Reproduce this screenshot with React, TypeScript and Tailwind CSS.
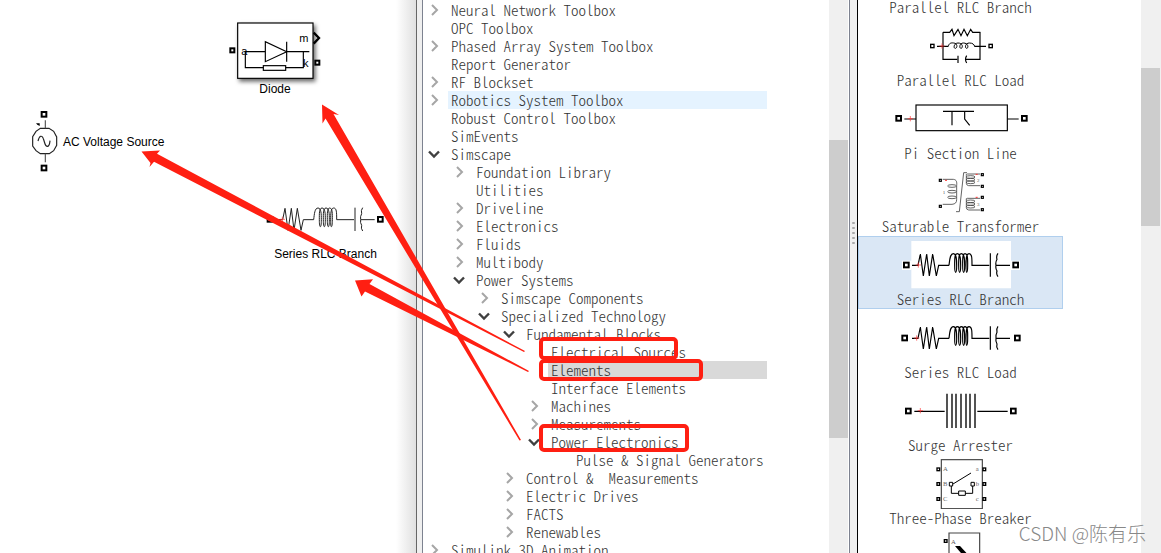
import React, { ReactNode } from 'react';

type NodeState = 'open' | 'closed' | 'leaf';

interface TreeNode {
  label: string;
  level: number;
  state: NodeState;
  highlight?: 'hover' | 'selected';
}

const treeNodes: TreeNode[] = [
  { label: 'Neural Network Toolbox', level: 0, state: 'closed' },
  { label: 'OPC Toolbox', level: 0, state: 'leaf' },
  { label: 'Phased Array System Toolbox', level: 0, state: 'closed' },
  { label: 'Report Generator', level: 0, state: 'leaf' },
  { label: 'RF Blockset', level: 0, state: 'closed' },
  { label: 'Robotics System Toolbox', level: 0, state: 'closed', highlight: 'hover' },
  { label: 'Robust Control Toolbox', level: 0, state: 'leaf' },
  { label: 'SimEvents', level: 0, state: 'leaf' },
  { label: 'Simscape', level: 0, state: 'open' },
  { label: 'Foundation Library', level: 1, state: 'closed' },
  { label: 'Utilities', level: 1, state: 'leaf' },
  { label: 'Driveline', level: 1, state: 'closed' },
  { label: 'Electronics', level: 1, state: 'closed' },
  { label: 'Fluids', level: 1, state: 'closed' },
  { label: 'Multibody', level: 1, state: 'closed' },
  { label: 'Power Systems', level: 1, state: 'open' },
  { label: 'Simscape Components', level: 2, state: 'closed' },
  { label: 'Specialized Technology', level: 2, state: 'open' },
  { label: 'Fundamental Blocks', level: 3, state: 'open' },
  { label: 'Electrical Sources', level: 4, state: 'leaf' },
  { label: 'Elements', level: 4, state: 'leaf', highlight: 'selected' },
  { label: 'Interface Elements', level: 4, state: 'leaf' },
  { label: 'Machines', level: 4, state: 'closed' },
  { label: 'Measurements', level: 4, state: 'closed' },
  { label: 'Power Electronics', level: 4, state: 'open' },
  { label: 'Pulse & Signal Generators', level: 5, state: 'leaf' },
  { label: 'Control &  Measurements', level: 3, state: 'closed' },
  { label: 'Electric Drives', level: 3, state: 'closed' },
  { label: 'FACTS', level: 3, state: 'closed' },
  { label: 'Renewables', level: 3, state: 'closed' },
  { label: 'Simulink 3D Animation', level: 0, state: 'closed' },
];

const indents = ['pl-0', 'pl-[25px]', 'pl-[50px]', 'pl-[75px]', 'pl-[100px]', 'pl-[125px]'];

const highlights = {
  hover: 'bg-[#e5f3ff]',
  selected: 'bg-[#d9d9d9]',
};

function Chevron({ open }: { open: boolean }) {
  return (
    <svg width="12" height="12" viewBox="0 0 12 12" fill="none">
      {open ? (
        <path d="M1 3.5 L6 8.5 L11 3.5" stroke="#404040" strokeWidth="2.4" />
      ) : (
        <path d="M4 1 L9 6 L4 11" stroke="#a6a6a6" strokeWidth="2" />
      )}
    </svg>
  );
}

function TreeRow({ node }: { node: TreeNode }) {
  return (
    <li className={`flex h-[18px] items-center ${indents[node.level]}`}>
      {node.state === 'leaf' ? (
        <span className="w-[25px] shrink-0" />
      ) : (
        <button aria-label={`Toggle ${node.label}`} className="flex h-[18px] w-[25px] shrink-0 items-center pl-[5px]">
          <Chevron open={node.state === 'open'} />
        </button>
      )}
      <span className={`h-[18px] flex-1 whitespace-pre pl-[3px] ${node.highlight ? highlights[node.highlight] : ''}`}>{node.label}</span>
    </li>
  );
}

// Connection port. Symbols are drawn on a grid of 3 units per pixel.
function Port({ x, y, r = 7 }: { x: number; y: number; r?: number }) {
  return <rect x={x - r} y={y - r} width={r * 2} height={r * 2} fill="white" strokeWidth={r > 5 ? 6 : r > 3 ? 4 : 3.5} />;
}

function Plus({ x, y }: { x: number; y: number }) {
  return <path d={`M${x - 8} ${y} h16 M${x} ${y - 8} v16`} stroke="#f33" strokeWidth="2" />;
}

// Resistor, coil and capacitor in a row, starting at 216,316
function SeriesRlc() {
  return (
    <>
      <path d="M216 316 H234 L241 282 L250 348 L260 282 L268 348 L278 282 L289 348 L296 316 H327" />
      <path d="M327 316 C329 300 330 281 340 281 C350 281 350 300 350 316 C350 330 349 337 347 337 C345 337 344 330 344 316 C344 300 343 281 352 281 C362 281 362 300 362 316 C362 330 361 337 359 337 C357 337 356 330 356 316 C356 300 355 281 364 281 C374 281 374 300 374 316 C374 330 373 337 371 337 C369 337 368 330 368 316 C368 300 367 281 375 281 C384 281 383 300 383 316 C383 330 382 337 380 337 C378 337 378 330 378 316 C378 300 378 281 387 281 C396 281 396 294 396 316 H448" />
      <path d="M451 280 V350 M474 280 Q468 288 471 298 Q466 307 468 316 Q466 325 471 333 Q468 342 474 350 M469 316 H510" />
    </>
  );
}

// One secondary winding of the transformer
function Winding({ y }: { y: number }) {
  return (
    <>
      <path d={`M420 ${y} H382 Q377 ${y} 379 ${y + 5} V${y + 28} Q379 ${y + 34} 386 ${y + 35} H420`} />
      <ellipse cx="392" cy={y + 9} rx="13" ry="4" />
      <ellipse cx="392" cy={y + 17} rx="13" ry="4" />
      <ellipse cx="392" cy={y + 25} rx="13" ry="4" />
    </>
  );
}

function LibraryIcon({ top, children }: { top: number; children?: ReactNode }) {
  return (
    <svg width="141" height="53" viewBox={`150 ${top} 423 159`} fill="none" stroke="black" strokeWidth="3.5" className="shrink-0">
      {children}
    </svg>
  );
}

const libraryBlocks = [
  { name: 'Parallel RLC Branch', icon: <LibraryIcon top={0} /> },
  {
    name: 'Parallel RLC Load',
    icon: (
      <LibraryIcon top={54}>
        <path d="M291 139 H325 M403 139 H438 M309 97 V178 H352 M420 97 V178 H378" />
        <path d="M309 97 H329 L336 88 L342 107 L354 88 L363 107 L372 88 L382 107 L392 88 L398 97 H421" />
        <path d="M325 139 C327 129 334 128 341 129 C354 130 352 145 346 145 C339 145 342 129 354 129 C370 129 369 145 363 145 C357 145 358 129 370 129 C386 129 386 145 380 145 C374 145 375 129 388 129 C398 129 402 133 404 139" strokeWidth="3" />
        <path d="M354 167 V189 M380 167 Q373 178 380 189" />
        <Plus x={306} y={138} />
        <Port x={277} y={138} r={5} />
        <Port x={452} y={138} r={5} />
      </LibraryIcon>
    ),
  },
  {
    name: 'Pi Section Line',
    icon: (
      <LibraryIcon top={273}>
        <rect x="228" y="315" width="274" height="77" />
        <path d="M193 357 H228 M502 357 H536 M309 334 H402 M336 334 V376 M374 334 V357 L389 376" />
        <Plus x={211} y={356} />
        <Port x={176} y={355} />
        <Port x={553} y={355} />
      </LibraryIcon>
    ),
  },
  {
    name: 'Saturable Transformer',
    icon: (
      <LibraryIcon top={12}>
        <g stroke="#444" strokeWidth="2.5">
          <path d="M308 58 H340 C350 59 351 66 350 77 V118 C350 128 346 132 336 133 H308" />
          <ellipse cx="336" cy="78" rx="13" ry="4" />
          <ellipse cx="336" cy="95" rx="13" ry="4" />
          <ellipse cx="336" cy="112" rx="13" ry="4" />
          <path d="M381 38 H371 L358 155 H348" />
          <Winding y={42} />
          <Winding y={115} />
        </g>
        <g fill="#555" stroke="none" fontSize="15" fontFamily="Liberation Serif, serif">
          <text x="308" y="101">1</text>
          <text x="411" y="65">2</text>
          <text x="411" y="138">3</text>
        </g>
        <path d="M315 61 h6 M407 43 h6 M407 112 h6" stroke="#f33" strokeWidth="3" />
        <Port x={301} y={61} r={3} />
        <Port x={301} y={139} r={3} />
        <Port x={427} y={44} r={3} />
        <Port x={427} y={79} r={3} />
        <Port x={427} y={112} r={3} />
        <Port x={427} y={149} r={3} />
      </LibraryIcon>
    ),
  },
  {
    name: 'Series RLC Branch',
    selected: true,
    icon: (
      <LibraryIcon top={231}>
        <path d="M214 243 H513 V385 H214 Z M186 302 H214 V330 H186 Z M513 302 H540 V330 H513 Z" fill="white" stroke="none" />
        <SeriesRlc />
        <Plus x={235} y={315} />
        <Port x={199} y={315} />
        <Port x={527} y={315} />
      </LibraryIcon>
    ),
  },
  {
    name: 'Series RLC Load',
    icon: (
      <LibraryIcon top={30}>
        <g transform="translate(0 -201)">
          <SeriesRlc />
        </g>
        <Plus x={230} y={114} />
        <Port x={194} y={114} />
        <Port x={532} y={114} />
      </LibraryIcon>
    ),
  },
  {
    name: 'Surge Arrester',
    icon: (
      <LibraryIcon top={249}>
        <path d="M223 334 H314 M412 334 H503" />
        <path d="M321 281 V384 M336 281 V384 M348 281 V384 M363 281 V384 M378 281 V384 M390 281 V384 M405 281 V384" stroke="#333" strokeWidth="5" />
        <Plus x={241} y={332} />
        <Port x={205} y={333} />
        <Port x={520} y={333} />
      </LibraryIcon>
    ),
  },
  {
    name: 'Three-Phase Breaker',
    icon: (
      <LibraryIcon top={48}>
        <rect x="304" y="59" width="123" height="147" stroke="#444" />
        <path d="M339 132 L393 99 M334 138 V160 H356 M376 160 H398 V138" strokeWidth="3" />
        <path d="M328 127 H338 V138 H328 Z M393 127 H403 V138 H393 Z M356 153 H376 V166 H356 Z" strokeWidth="3" />
        <g fill="#666" stroke="none" fontSize="20" fontFamily="Liberation Serif, serif">
          <text x="309" y="94">A</text>
          <text x="309" y="139">B</text>
          <text x="309" y="183">C</text>
          <text x="407" y="94">a</text>
          <text x="407" y="139">b</text>
          <text x="407" y="183">c</text>
        </g>
        <Port x={295} y={88} r={4} />
        <Port x={295} y={132} r={4} />
        <Port x={295} y={177} r={4} />
        <Port x={433} y={88} r={4} />
        <Port x={433} y={132} r={4} />
        <Port x={433} y={177} r={4} />
      </LibraryIcon>
    ),
  },
  {
    name: '',
    icon: (
      <LibraryIcon top={267}>
        <path d="M327 430 V279 H419 V430" stroke="#444" />
        <path d="M345 318 H360 L385 345 H368 Z" fill="black" stroke="none" />
        <text x="333" y="311" fill="#555" stroke="none" fontSize="20" fontFamily="Liberation Serif, serif">A</text>
        <Port x={317} y={303} r={4} />
      </LibraryIcon>
    ),
  },
];

function Canvas() {
  return (
    <section className="relative min-w-0 flex-1 font-['Liberation_Sans',sans-serif] text-xs leading-4 text-black">
      <div className="absolute inset-y-0 right-0 w-5 bg-linear-to-r from-white to-[#e0e0e0]" />

      <figure className="absolute left-[228px] top-[21px] flex w-[94px] flex-col items-center">
        <svg width="94" height="60" viewBox="54 63 282 180" fill="none" stroke="black" strokeWidth="3.5" className="overflow-visible">
          <rect x="83" y="69" width="226" height="166" fill="white" className="drop-shadow-[6px_8px_6px_#666]" />
          <path d="M103 155 H166 V125 L230 155 L166 185 V155 M230 125 V185 M230 155 H298 M106 155 V203 H160 M227 203 H280 V155" />
          <rect x="160" y="197" width="67" height="14" />
          <path d="M311 98 L327 114 L311 131" strokeWidth="7" />
          <g fill="black" stroke="none" fontSize="33" fontFamily="Liberation Sans, sans-serif">
            <text x="268" y="126">m</text>
            <text x="279" y="201">k</text>
            <text x="94" y="164">a</text>
          </g>
          <Port x={67} y={151} r={6} />
          <Port x={322} y={188} r={6} />
        </svg>
        <figcaption>Diode</figcaption>
      </figure>

      <figure className="absolute left-[30px] top-[110px] flex items-center gap-[3px]">
        <svg width="30" height="63" viewBox="90 60 90 189" fill="none" stroke="#222" strokeWidth="3.5">
          <path d="M121 115 H147 L161 124 L170 141 V166 L161 182 L148 191 H121 L108 182 L98 168 V140 L108 124 Z" />
          <path d="M136 91 V115 M136 191 V217" stroke="#555" />
          <path d="M114 153 C118 137 126 134 130 146 C135 158 134 170 143 169 C149 167 149 160 150 152" />
          <path d="M108 100 H119 V108 L112 104 Z" fill="black" stroke="none" />
          <g stroke="black">
            <Port x={132} y={73} />
            <Port x={132} y={234} />
          </g>
        </svg>
        <figcaption>AC Voltage Source</figcaption>
      </figure>

      <figure className="absolute left-[265px] top-[205px] flex w-[121px] flex-col items-center gap-3">
        <svg width="121" height="29" viewBox="75 75 363 87" fill="none" stroke="black" strokeWidth="3">
          <g transform="translate(-106 -197)" stroke="#222">
            <SeriesRlc />
          </g>
          <Plus x={127} y={118} />
          <Port x={90} y={118} />
          <Port x={421} y={118} />
        </svg>
        <figcaption>Series RLC Branch</figcaption>
      </figure>
    </section>
  );
}

// Red arrows and frames laid over all the panes
function Annotations() {
  return (
    <svg width="720" height="553" viewBox="0 0 720 553" className="pointer-events-none absolute left-0 top-0" fill="none">
      <g fill="#ff1f12">
        <path d="M322 104.5 L339 115 L333.5 114 L521 440 L519.5 440.5 L325.5 118.5 L322.5 123.5 Z" />
        <path d="M141.5 151.5 L160 150.5 L157 153.8 L525 351 L524 352 L154 161.8 L149.5 167 L150.5 163 Z" />
        <path d="M355 280.5 L373 279.3 L369.5 284 L529 371 L528 372 L365 291.5 L361.5 296.5 Z" />
      </g>
      <g stroke="#ff1f12" strokeWidth="4">
        <rect x="541" y="339" width="135" height="19" rx="3" />
        <rect x="541" y="361" width="160" height="18" rx="3" />
        <rect x="541" y="426" width="146" height="24" rx="3" />
      </g>
    </svg>
  );
}

export default function App() {
  return (
    <main className="relative flex h-screen overflow-hidden bg-white font-['Noto_Sans_CJK_SC',monospace] text-[15px] font-light leading-[18px] text-[#333]">
      <Canvas />
      <div className="w-[7px] shrink-0 border-x border-l-[#666] border-r-[#7d8290] bg-[#efefef]" />

      <nav className="flex w-[425px] shrink-0">
        <ul className="w-[344px] pt-px [font-feature-settings:'hwid']">
          {treeNodes.map((node) => (
            <TreeRow key={node.label} node={node} />
          ))}
        </ul>
        <div className="ml-auto w-[19px] bg-[#f0f0f0] pt-[140px]">
          <div className="h-[298px] bg-[#cdcdcd]" />
        </div>
      </nav>

      <div className="ml-px flex w-[9px] shrink-0 flex-col items-center justify-center gap-[3px] border-l border-r border-l-[#7d8290] border-r-black bg-[#f0f0f0] pb-[88px]">
        {[0, 1, 2, 3, 4].map((i) => (
          <span key={i} className="h-[2px] w-[3px] rounded-full bg-[#aaa]" />
        ))}
      </div>

      <section className="flex w-[303px] shrink-0">
        <ul className="-mt-14 w-[205px] [font-feature-settings:'hwid']">
          {libraryBlocks.map((block) => (
            <li
              key={block.name}
              className={`flex h-[73px] flex-col items-center border ${block.selected ? 'border-[#b0cfee] bg-[#dae7f5]' : 'border-transparent'}`}
            >
              {block.icon}
              <span className="whitespace-nowrap">{block.name}</span>
            </li>
          ))}
        </ul>
        <div className="ml-auto w-5 bg-[#f0f0f0] pr-px pt-[68px]">
          <div className="h-[158px] bg-[#cdcdcd]" />
        </div>
      </section>

      <Annotations />
      <p className="absolute bottom-1.5 right-[15px] text-[19px] leading-7 text-[#888]">CSDN @陈有乐</p>
    </main>
  );
}
